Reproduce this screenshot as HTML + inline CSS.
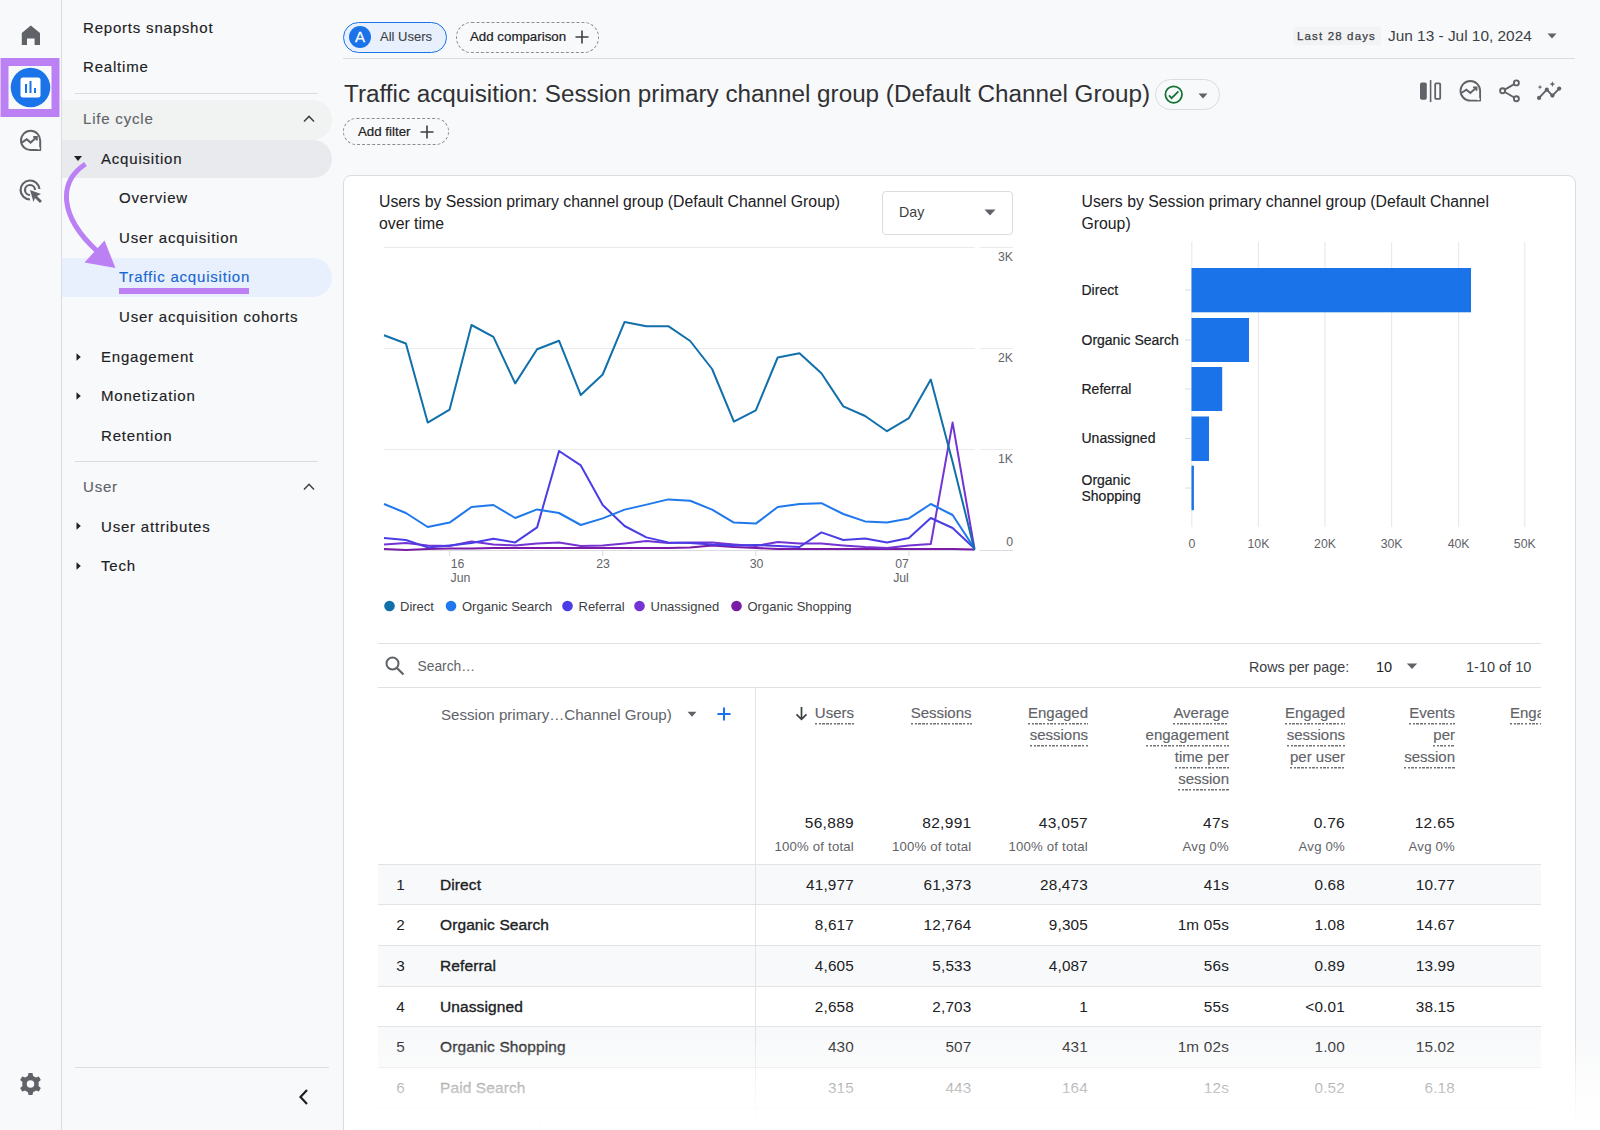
<!DOCTYPE html>
<html><head><meta charset="utf-8">
<style>
*{box-sizing:border-box;margin:0;padding:0}
html,body{width:1600px;height:1130px;overflow:hidden;background:#f8f9fa;font-family:"Liberation Sans",sans-serif;color:#202124}
.a{position:absolute;white-space:nowrap}
.rail{position:absolute;left:0;top:0;width:62px;height:1130px;border-right:1px solid #dadce0;background:#f8f9fa}
.nav{font-size:15px;letter-spacing:0.8px;color:#202124;line-height:22px;-webkit-text-stroke:0.15px currentColor}
.sec{color:#5f6368}
.hl{position:absolute;left:62px;width:270px;border-radius:0 20px 20px 0}
.tri{position:absolute;width:0;height:0}
.card{position:absolute;left:343px;top:175px;width:1233px;height:1000px;background:#fff;border:1px solid #dadce0;border-radius:8px}
.hd{font-size:15px;line-height:19px;color:#5f6368;-webkit-text-stroke:0.15px #5f6368;padding-bottom:3px;background:repeating-linear-gradient(to right,#6f7378 0 2.4px,transparent 2.4px 3.7px) left bottom/100% 1.5px no-repeat}
.tv{font-size:15.5px;line-height:20px;color:#202124;letter-spacing:0.3px}
.ts{font-size:13.2px;line-height:16px;color:#5f6368;letter-spacing:0.2px}
.rv{font-size:15.3px;line-height:20px;color:#202124;letter-spacing:0.2px}
.rn{font-size:15.5px;line-height:20px;color:#202124;-webkit-text-stroke:0.35px #202124;letter-spacing:0.1px}
</style></head><body>
<!-- left rail -->
<div class="rail"></div>
<!-- nav panel -->
<div id="navwrap">
<div class="a nav" style="left:83px;top:17px">Reports snapshot</div>
<div class="a nav" style="left:83px;top:56px">Realtime</div>
<div class="a" style="left:75px;top:93px;width:243px;height:1px;background:#dadce0"></div>
<div class="hl" style="top:100px;height:39.5px;background:#f1f3f3"></div>
<div class="a nav sec" style="left:83px;top:108px">Life cycle</div>
<div class="hl" style="top:139.5px;height:38.5px;background:#e8eaed"></div>
<div class="a nav" style="left:101px;top:148px">Acquisition</div>
<div class="a nav" style="left:119px;top:187px">Overview</div>
<div class="a nav" style="left:119px;top:227px">User acquisition</div>
<div class="hl" style="top:258px;height:39px;background:#e8f0fe"></div>
<div class="a nav" style="left:119px;top:266px;color:#1967d2">Traffic acquisition</div>
<div class="a" style="left:119px;top:288px;width:130px;height:6px;background:#bd7ff4"></div>
<div class="a nav" style="left:119px;top:306px">User acquisition cohorts</div>
<div class="a nav" style="left:101px;top:346px">Engagement</div>
<div class="a nav" style="left:101px;top:385px">Monetization</div>
<div class="a nav" style="left:101px;top:425px">Retention</div>
<div class="a" style="left:75px;top:461px;width:243px;height:1px;background:#dadce0"></div>
<div class="a nav sec" style="left:83px;top:476px">User</div>
<div class="a nav" style="left:101px;top:516px">User attributes</div>
<div class="a nav" style="left:101px;top:555px">Tech</div>
<div class="a" style="left:75px;top:1067px;width:254px;height:1px;background:#dadce0"></div>
</div>
<!-- rail icons -->
<svg class="a" style="left:0;top:0" width="62" height="1130" viewBox="0 0 62 1130">
 <path d="M30.8 25.5 L40 33 V45 H34.6 V38.6 H27 V45 H21.8 V33 Z" fill="#5f6368"/>
 <rect x="4.5" y="62" width="51" height="51" fill="none" stroke="#bc80f5" stroke-width="8"/>
 <circle cx="30.5" cy="87.5" r="19.8" fill="#1a73e8"/>
 <rect x="20.5" y="77.5" width="20" height="20" rx="2.5" fill="#fff"/>
 <rect x="25" y="84" width="2" height="9" fill="#1a73e8"/>
 <rect x="29.5" y="81" width="2" height="12" fill="#1a73e8"/>
 <rect x="34" y="88" width="2" height="5" fill="#1a73e8"/>
 <path d="M30.6 150 A9.6 9.6 0 1 1 40.2 140.4 V150 Z" fill="none" stroke="#5f6368" stroke-width="2" stroke-linejoin="round"/>
 <circle cx="38.5" cy="148.3" r="1.3" fill="#fff"/>
 <path d="M21.7 142.6 L26.7 139.3 L30.6 142.6 L36.2 137.6" fill="none" stroke="#5f6368" stroke-width="2"/>
 <path d="M33.2 137 H36.8 V140.5" fill="none" stroke="#5f6368" stroke-width="2"/>
 <g fill="none" stroke="#5f6368" stroke-width="2.2">
  <path d="M39.5 189 A9.5 9.5 0 1 0 30 199.5"/>
  <path d="M35 190 A5 5 0 1 0 30 195"/>
 </g>
 <path d="M30 190 L41 194 L37 196 L42 201 L40 203 L35 198 L33.5 202 Z" fill="#5f6368"/>
 <g transform="translate(30.5 1084) scale(1.1)" fill="#5f6368">
  <path d="M-1.8 -10 H1.8 L2.4 -7.2 A7.6 7.6 0 0 1 4.9 -5.8 L7.6 -6.8 L9.4 -3.7 L7.3 -1.8 A7.6 7.6 0 0 1 7.3 1.8 L9.4 3.7 L7.6 6.8 L4.9 5.8 A7.6 7.6 0 0 1 2.4 7.2 L1.8 10 H-1.8 L-2.4 7.2 A7.6 7.6 0 0 1 -4.9 5.8 L-7.6 6.8 L-9.4 3.7 L-7.3 1.8 A7.6 7.6 0 0 1 -7.3 -1.8 L-9.4 -3.7 L-7.6 -6.8 L-4.9 -5.8 A7.6 7.6 0 0 1 -2.4 -7.2 Z M0 -3.4 A3.4 3.4 0 1 0 0 3.4 A3.4 3.4 0 1 0 0 -3.4 Z" fill-rule="evenodd"/>
 </g>
</svg>
<!-- nav small icons + arrow -->
<svg class="a" style="left:62;top:0;left:62px" width="282" height="1130" viewBox="62 0 282 1130">
 <path d="M74 156 L82 156 L78 161 Z" fill="#202124"/>
 <path d="M76.5 353.2 L80.8 357 L76.5 360.8 Z" fill="#202124"/>
 <path d="M76.5 392.2 L80.8 396 L76.5 399.8 Z" fill="#202124"/>
 <path d="M76.5 522.2 L80.8 526 L76.5 529.8 Z" fill="#202124"/>
 <path d="M76.5 562.2 L80.8 566 L76.5 569.8 Z" fill="#202124"/>
 <path d="M304 121.6 L309 116.4 L314 121.6" fill="none" stroke="#3c4043" stroke-width="1.45"/>
 <path d="M304 489.4 L309 484.2 L314 489.4" fill="none" stroke="#3c4043" stroke-width="1.45"/>
 <path d="M307 1090 L300.5 1097 L307 1104" fill="none" stroke="#202124" stroke-width="2.2"/>
 <path d="M85.5 164 C 58 182, 59 216, 97 251" fill="none" stroke="#bc80f5" stroke-width="5"/>
 <path d="M84.5 262.5 L115.5 268 L104.5 240.5 Z" fill="#bc80f5"/>
</svg>
<!-- MAIN header -->
<div class="a" style="left:343px;top:22px;width:104px;height:31px;border:1px solid #1a73e8;background:#e8f0fe;border-radius:16px"></div>
<div class="a" style="left:349px;top:26px;width:22px;height:22px;border-radius:50%;background:#1a73e8;color:#fff;font-size:15px;line-height:22px;text-align:center;-webkit-text-stroke:0.3px #fff">A</div>
<div class="a" style="left:380px;top:29px;font-size:13px;line-height:16px;color:#3c4043;-webkit-text-stroke:0.1px #3c4043">All Users</div>
<div class="a" style="left:456px;top:22px;width:143px;height:31px;border:1px dashed #8a8f94;border-radius:16px"></div>
<div class="a" style="left:470px;top:29px;font-size:13.3px;line-height:16px;color:#202124;-webkit-text-stroke:0.2px #202124">Add comparison</div>
<svg class="a" style="left:575px;top:30px" width="14" height="14"><path d="M7 0.5V13.5M0.5 7H13.5" stroke="#3c4043" stroke-width="1.6"/></svg>
<div class="a" style="left:343px;top:58px;width:1232px;height:1px;background:#dadce0"></div>
<div class="a" style="left:1293px;top:27px;width:88px;height:18px;background:#f1f3f4;border-radius:2px"></div>
<div class="a" style="left:1297px;top:28.5px;font-size:11.5px;line-height:14px;letter-spacing:1.15px;color:#3c4043;-webkit-text-stroke:0.25px #3c4043">Last 28 days</div>
<div class="a" style="left:1388px;top:26px;font-size:15.4px;line-height:19px;color:#3c4043">Jun 13 - Jul 10, 2024</div>
<svg class="a" style="left:1546px;top:32px" width="12" height="8"><path d="M1.5 1.5H10.5L6 6.5Z" fill="#5f6368"/></svg>
<div class="a" style="left:344px;top:80px;font-size:24.25px;line-height:28px;color:#303134">Traffic acquisition: Session primary channel group (Default Channel Group)</div>
<div class="a" style="left:1155px;top:79px;width:65px;height:31px;border:1px solid #dadce0;border-radius:16px"></div>
<svg class="a" style="left:1162px;top:83px" width="24" height="24"><circle cx="11.7" cy="11.6" r="8.3" fill="none" stroke="#137333" stroke-width="1.75"/><path d="M7 12.3L9.6 15.2L16.4 8.3" fill="none" stroke="#137333" stroke-width="1.75"/></svg>
<svg class="a" style="left:1196.5px;top:91.5px" width="12" height="8"><path d="M1.5 1.5H10.5L6 6.5Z" fill="#5f6368"/></svg>
<svg class="a" style="left:1412px;top:76px" width="160" height="32" fill="#5f6368">
 <rect x="8" y="6.4" width="6.8" height="17.4" rx="1.8"/>
 <rect x="17.8" y="4.1" width="1.6" height="22"/>
 <rect x="23.2" y="7.3" width="5" height="15.6" rx="1" fill="none" stroke="#5f6368" stroke-width="1.8"/>
 <path d="M58.3 24.6 A9.8 9.8 0 1 1 68.1 14.8 V24.6 Z" fill="none" stroke="#5f6368" stroke-width="1.9" stroke-linejoin="round"/>
 <circle cx="66.4" cy="23" r="1.3" fill="#fff"/>
 <path d="M49.3 17 L54.4 13.7 L58.3 17 L63.9 12" fill="none" stroke="#5f6368" stroke-width="1.9"/>
 <path d="M61 11.4 H64.5 V14.8" fill="none" stroke="#5f6368" stroke-width="1.9"/>
 <g fill="none" stroke="#5f6368" stroke-width="1.9">
  <circle cx="104.4" cy="6.9" r="2.5"/><circle cx="90.6" cy="14.8" r="2.5"/><circle cx="104.4" cy="22.7" r="2.5"/>
  <path d="M92.8 13.6 L102.2 8.1 M92.8 16 L102.2 21.5"/>
 </g>
 <path d="M127.1 21.9 L134.8 13.7 L140.4 19.6 L147.2 12.6" fill="none" stroke="#5f6368" stroke-width="1.9"/>
 <circle cx="127.1" cy="21.9" r="2.1"/><circle cx="134.8" cy="13.7" r="2.1"/><circle cx="140.4" cy="19.6" r="2.1"/><circle cx="147.2" cy="12.6" r="2.1"/>
 <path d="M140.4 5.3 L141.2 7.3 L143.2 8.1 L141.2 8.9 L140.4 10.9 L139.6 8.9 L137.6 8.1 L139.6 7.3Z"/>
 <path d="M128 8.8 L128.7 10.4 L130.3 11.1 L128.7 11.8 L128 13.4 L127.3 11.8 L125.7 11.1 L127.3 10.4Z"/>
</svg>
<div class="a" style="left:343px;top:118px;width:106px;height:27px;border:1px dashed #8a8f94;border-radius:14px"></div>
<div class="a" style="left:358px;top:124px;font-size:13.3px;line-height:16px;color:#202124;-webkit-text-stroke:0.2px #202124">Add filter</div>
<svg class="a" style="left:420px;top:125px" width="14" height="14"><path d="M7 0.5V13.5M0.5 7H13.5" stroke="#3c4043" stroke-width="1.6"/></svg>
<!-- card -->
<div class="card"></div>
<div class="a" style="left:379px;top:191px;font-size:15.8px;line-height:22px;color:#202124">Users by Session primary channel group (Default Channel Group)<br>over time</div>
<div class="a" style="left:882px;top:191px;width:131px;height:44px;border:1px solid #dadce0;border-radius:4px;background:#fff"></div>
<div class="a" style="left:899px;top:203px;font-size:14.2px;line-height:18px;color:#3c4043">Day</div>
<svg class="a" style="left:983px;top:208px" width="14" height="9"><path d="M1.5 1.5H12.5L7 7.5Z" fill="#5f6368"/></svg>
<div class="a" style="left:1081.5px;top:191px;font-size:15.8px;line-height:22px;color:#202124">Users by Session primary channel group (Default Channel<br>Group)</div>
<svg class="a" style="left:0;top:0" width="1600" height="1130" viewBox="0 0 1600 1130" font-family="Liberation Sans" >
 <g stroke="#e8eaed" stroke-width="1.2">
  <path d="M384 247.5H975M979.5 247.5H1013M384 348.5H975M979.5 348.5H1013M384 449.5H975M979.5 449.5H1013"/>
 </g>
 <path d="M384 550.5H975M979.5 550.5H1013" stroke="#dadce0" stroke-width="1.2"/>
 <path d="M449.6 550V556M602.7 550V556M755.8 550V556M908.9 550V556" stroke="#dadce0" stroke-width="1"/>
 <g fill="#5f6368" font-size="12.3" text-anchor="end">
  <text x="1013" y="260.5">3K</text><text x="1013" y="361.5">2K</text><text x="1013" y="462.5">1K</text><text x="1013" y="546">0</text>
 </g>
 <g fill="#5f6368" font-size="12.3" text-anchor="middle">
  <text x="457.5" y="567.5">16</text><text x="460.5" y="581.5">Jun</text>
  <text x="603" y="567.5">23</text><text x="756.5" y="567.5">30</text>
  <text x="902" y="567.5">07</text><text x="901" y="581.5">Jul</text>
 </g>
 <g fill="none" stroke-width="2" stroke-linejoin="round">
  <polyline points="384.0,549.0 405.9,550.0 427.7,549.0 449.6,548.5 471.5,548.5 493.4,548.0 515.2,548.0 537.1,548.0 559.0,548.0 580.8,548.0 602.7,548.0 624.6,548.0 646.4,548.0 668.3,548.0 690.2,547.5 712.1,545.5 733.9,547.0 755.8,548.0 777.7,549.0 799.5,549.0 821.4,549.0 843.3,549.0 865.1,549.0 887.0,549.0 908.9,549.0 930.8,549.0 952.6,549.0 974.5,549.5" stroke="#7b1aa6"/>
  <polyline points="384.0,544.6 405.9,543.0 427.7,545.4 449.6,546.0 471.5,541.4 493.4,544.4 515.2,545.4 537.1,543.4 559.0,542.4 580.8,546.0 602.7,545.4 624.6,543.4 646.4,541.0 668.3,543.0 690.2,542.4 712.1,542.4 733.9,544.4 755.8,546.0 777.7,542.0 799.5,543.4 821.4,543.4 843.3,545.4 865.1,547.0 887.0,548.0 908.9,545.4 930.8,544.0 952.6,422.6 974.5,549.0" stroke="#7434d4"/>
  <polyline points="384.0,538.0 405.9,540.0 427.7,547.4 449.6,545.4 471.5,543.0 493.4,538.8 515.2,542.4 537.1,527.4 559.0,451.0 580.8,465.4 602.7,505.0 624.6,526.0 646.4,537.4 668.3,542.4 690.2,543.0 712.1,544.5 733.9,545.5 755.8,545.0 777.7,546.0 799.5,547.0 821.4,532.4 843.3,540.0 865.1,538.6 887.0,542.4 908.9,538.0 930.8,518.0 952.6,528.0 974.5,548.5" stroke="#4a3de6"/>
  <polyline points="384.0,504.0 405.9,513.0 427.7,527.0 449.6,522.6 471.5,507.0 493.4,505.0 515.2,518.0 537.1,509.4 559.0,513.0 580.8,525.0 602.7,518.4 624.6,509.6 646.4,504.6 668.3,499.4 690.2,500.8 712.1,509.6 733.9,522.6 755.8,523.6 777.7,507.0 799.5,504.0 821.4,503.2 843.3,514.0 865.1,521.4 887.0,522.6 908.9,518.4 930.8,504.0 952.6,515.0 974.5,548.5" stroke="#1f78ec"/>
  <polyline points="384.0,335.3 405.9,343.5 427.7,422.6 449.6,409.6 471.5,325.0 493.4,336.9 515.2,383.4 537.1,349.3 559.0,340.7 580.8,395.1 602.7,374.5 624.6,321.9 646.4,326.2 668.3,326.2 690.2,341.0 712.1,369.0 733.9,421.7 755.8,410.4 777.7,357.5 799.5,353.3 821.4,373.2 843.3,406.4 865.1,416.0 887.0,431.2 908.9,418.1 930.8,379.6 952.6,462.0 974.5,550.0" stroke="#1170aa"/>
 </g>
 <g font-size="13" fill="#3c4043">
  <circle cx="389.5" cy="606" r="5.3" fill="#1170aa"/><text x="400" y="610.5">Direct</text>
  <circle cx="451" cy="606" r="5.3" fill="#1f78ec"/><text x="462" y="610.5">Organic Search</text>
  <circle cx="567.5" cy="606" r="5.3" fill="#4a3de6"/><text x="578.5" y="610.5">Referral</text>
  <circle cx="639.5" cy="606" r="5.3" fill="#7434d4"/><text x="650.5" y="610.5">Unassigned</text>
  <circle cx="736.5" cy="606" r="5.3" fill="#7b1aa6"/><text x="747.5" y="610.5">Organic Shopping</text>
 </g>
 <g stroke="#e8eaed" stroke-width="1.2">
  <path d="M1191.8 242V527M1258.4 242V527M1325 242V527M1391.6 242V527M1458.6 242V527M1524.8 242V527"/>
 </g>
 <path d="M1185 290H1191M1185 340H1191M1185 389H1191M1185 438.5H1191M1185 488H1191" stroke="#dadce0" stroke-width="1"/>
 <g fill="#1a73e8">
  <rect x="1191.5" y="268" width="279.5" height="44.3"/>
  <rect x="1191.5" y="318" width="57.5" height="44"/>
  <rect x="1191.5" y="367" width="30.7" height="44"/>
  <rect x="1191.5" y="416.5" width="17.5" height="44.5"/>
  <rect x="1191.5" y="465.7" width="2.4" height="44.5"/>
 </g>
 <g font-size="14" fill="#202124" stroke="#202124" stroke-width="0.2">
  <text x="1081.5" y="294.5">Direct</text>
  <text x="1081.5" y="344.5">Organic Search</text>
  <text x="1081.5" y="393.5">Referral</text>
  <text x="1081.5" y="443">Unassigned</text>
  <text x="1081.5" y="485">Organic</text>
  <text x="1081.5" y="500.5">Shopping</text>
 </g>
 <g fill="#5f6368" font-size="12.3" text-anchor="middle">
  <text x="1191.8" y="548">0</text><text x="1258.4" y="548">10K</text><text x="1325" y="548">20K</text><text x="1391.6" y="548">30K</text><text x="1458.6" y="548">40K</text><text x="1524.8" y="548">50K</text>
 </g>
</svg>
<div class="a" style="left:378px;top:643px;width:1163px;height:1px;background:#e0e0e0"></div>
<svg class="a" style="left:384px;top:655px" width="22" height="22"><circle cx="8.5" cy="8.5" r="6" fill="none" stroke="#5f6368" stroke-width="2"/><path d="M13 13L19.5 19.5" stroke="#5f6368" stroke-width="2.2"/></svg>
<div class="a" style="left:417.5px;top:658px;font-size:13.8px;line-height:18px;color:#5f6368">Search…</div>
<div class="a" style="left:1249px;top:657.5px;font-size:14.3px;line-height:18px;color:#3c4043">Rows per page:</div>
<div class="a" style="left:1376px;top:657.5px;font-size:14.5px;line-height:18px;color:#202124">10</div>
<svg class="a" style="left:1406px;top:663px" width="12" height="7"><path d="M0.8 0.5H11.2L6 6Z" fill="#5f6368"/></svg>
<div class="a" style="left:1466px;top:657.5px;font-size:14.5px;line-height:18px;color:#3c4043">1-10 of 10</div>
<div class="a" style="left:378px;top:687px;width:1163px;height:1px;background:#e0e0e0"></div>
<div class="a" style="left:378px;top:864.5px;width:1163px;height:40.1px;background:#f8f9fa"></div>
<div class="a" style="left:378px;top:945.3px;width:1163px;height:40.9px;background:#f8f9fa"></div>
<div class="a" style="left:378px;top:1026.9px;width:1163px;height:40.6px;background:#f8f9fa"></div>
<div class="a" style="left:378px;top:864.0px;width:1163px;height:1px;background:#e3e3e3"></div>
<div class="a" style="left:378px;top:904.1px;width:1163px;height:1px;background:#e3e3e3"></div>
<div class="a" style="left:378px;top:944.8px;width:1163px;height:1px;background:#e3e3e3"></div>
<div class="a" style="left:378px;top:985.7px;width:1163px;height:1px;background:#e3e3e3"></div>
<div class="a" style="left:378px;top:1026.4px;width:1163px;height:1px;background:#e3e3e3"></div>
<div class="a" style="left:378px;top:1067.0px;width:1163px;height:1px;background:#e3e3e3"></div>
<div class="a" style="left:378px;top:1107.7px;width:1163px;height:1px;background:#e3e3e3"></div>
<div class="a" style="left:378px;top:1148.3px;width:1163px;height:1px;background:#e3e3e3"></div>
<div class="a" style="left:754.5px;top:687px;width:1px;height:460px;background:#e3e3e3"></div>
<div class="a" style="left:441px;top:705px;font-size:15.1px;line-height:19px;color:#5f6368">Session primary…Channel Group)</div>
<svg class="a" style="left:687px;top:711px" width="10" height="7"><path d="M0.5 0.8H9.5L5 5.8Z" fill="#5f6368"/></svg>
<svg class="a" style="left:716px;top:706px" width="16" height="16"><path d="M8 1.5V14.5M1.5 8H14.5" stroke="#1a73e8" stroke-width="2"/></svg>
<svg class="a" style="left:795px;top:706px" width="13" height="15"><path d="M6.5 1V13M1.5 8.3L6.5 13.3L11.5 8.3" fill="none" stroke="#3c4043" stroke-width="1.7"/></svg>
<div class="a hd" style="right:746.0px;top:702.5px">Users</div>
<div class="a hd" style="right:628.5px;top:702.5px">Sessions</div>
<div class="a hd" style="right:512.0px;top:702.5px">Engaged</div>
<div class="a hd" style="right:512.0px;top:724.5px">sessions</div>
<div class="a hd" style="right:371.0px;top:702.5px">Average</div>
<div class="a hd" style="right:371.0px;top:724.5px">engagement</div>
<div class="a hd" style="right:371.0px;top:746.5px">time per</div>
<div class="a hd" style="right:371.0px;top:768.5px">session</div>
<div class="a hd" style="right:255.0px;top:702.5px">Engaged</div>
<div class="a hd" style="right:255.0px;top:724.5px">sessions</div>
<div class="a hd" style="right:255.0px;top:746.5px">per user</div>
<div class="a hd" style="right:145.0px;top:702.5px">Events</div>
<div class="a hd" style="right:145.0px;top:724.5px">per</div>
<div class="a hd" style="right:145.0px;top:746.5px">session</div>
<div class="a hd" style="left:1510px;top:702.5px;width:31px;overflow:hidden">Engagement</div>
<div class="a tv" style="right:746.0px;top:812.5px">56,889</div>
<div class="a ts" style="right:746.0px;top:838.5px">100% of total</div>
<div class="a tv" style="right:628.5px;top:812.5px">82,991</div>
<div class="a ts" style="right:628.5px;top:838.5px">100% of total</div>
<div class="a tv" style="right:512.0px;top:812.5px">43,057</div>
<div class="a ts" style="right:512.0px;top:838.5px">100% of total</div>
<div class="a tv" style="right:371.0px;top:812.5px">47s</div>
<div class="a ts" style="right:371.0px;top:838.5px">Avg 0%</div>
<div class="a tv" style="right:255.0px;top:812.5px">0.76</div>
<div class="a ts" style="right:255.0px;top:838.5px">Avg 0%</div>
<div class="a tv" style="right:145.0px;top:812.5px">12.65</div>
<div class="a ts" style="right:145.0px;top:838.5px">Avg 0%</div>
<div class="a rv" style="left:392px;width:17px;text-align:center;top:874.5px">1</div>
<div class="a rn" style="left:440px;top:874.5px">Direct</div>
<div class="a rv" style="right:746.0px;top:874.5px">41,977</div>
<div class="a rv" style="right:628.5px;top:874.5px">61,373</div>
<div class="a rv" style="right:512.0px;top:874.5px">28,473</div>
<div class="a rv" style="right:371.0px;top:874.5px">41s</div>
<div class="a rv" style="right:255.0px;top:874.5px">0.68</div>
<div class="a rv" style="right:145.0px;top:874.5px">10.77</div>
<div class="a rv" style="left:392px;width:17px;text-align:center;top:915.0px">2</div>
<div class="a rn" style="left:440px;top:915.0px">Organic Search</div>
<div class="a rv" style="right:746.0px;top:915.0px">8,617</div>
<div class="a rv" style="right:628.5px;top:915.0px">12,764</div>
<div class="a rv" style="right:512.0px;top:915.0px">9,305</div>
<div class="a rv" style="right:371.0px;top:915.0px">1m 05s</div>
<div class="a rv" style="right:255.0px;top:915.0px">1.08</div>
<div class="a rv" style="right:145.0px;top:915.0px">14.67</div>
<div class="a rv" style="left:392px;width:17px;text-align:center;top:955.8px">3</div>
<div class="a rn" style="left:440px;top:955.8px">Referral</div>
<div class="a rv" style="right:746.0px;top:955.8px">4,605</div>
<div class="a rv" style="right:628.5px;top:955.8px">5,533</div>
<div class="a rv" style="right:512.0px;top:955.8px">4,087</div>
<div class="a rv" style="right:371.0px;top:955.8px">56s</div>
<div class="a rv" style="right:255.0px;top:955.8px">0.89</div>
<div class="a rv" style="right:145.0px;top:955.8px">13.99</div>
<div class="a rv" style="left:392px;width:17px;text-align:center;top:996.6px">4</div>
<div class="a rn" style="left:440px;top:996.6px">Unassigned</div>
<div class="a rv" style="right:746.0px;top:996.6px">2,658</div>
<div class="a rv" style="right:628.5px;top:996.6px">2,703</div>
<div class="a rv" style="right:512.0px;top:996.6px">1</div>
<div class="a rv" style="right:371.0px;top:996.6px">55s</div>
<div class="a rv" style="right:255.0px;top:996.6px">&lt;0.01</div>
<div class="a rv" style="right:145.0px;top:996.6px">38.15</div>
<div class="a rv" style="left:392px;width:17px;text-align:center;top:1037.2px">5</div>
<div class="a rn" style="left:440px;top:1037.2px">Organic Shopping</div>
<div class="a rv" style="right:746.0px;top:1037.2px">430</div>
<div class="a rv" style="right:628.5px;top:1037.2px">507</div>
<div class="a rv" style="right:512.0px;top:1037.2px">431</div>
<div class="a rv" style="right:371.0px;top:1037.2px">1m 02s</div>
<div class="a rv" style="right:255.0px;top:1037.2px">1.00</div>
<div class="a rv" style="right:145.0px;top:1037.2px">15.02</div>
<div class="a rv" style="left:392px;width:17px;text-align:center;top:1077.8px">6</div>
<div class="a rn" style="left:440px;top:1077.8px">Paid Search</div>
<div class="a rv" style="right:746.0px;top:1077.8px">315</div>
<div class="a rv" style="right:628.5px;top:1077.8px">443</div>
<div class="a rv" style="right:512.0px;top:1077.8px">164</div>
<div class="a rv" style="right:371.0px;top:1077.8px">12s</div>
<div class="a rv" style="right:255.0px;top:1077.8px">0.52</div>
<div class="a rv" style="right:145.0px;top:1077.8px">6.18</div>
<div class="a rv" style="left:392px;width:17px;text-align:center;top:1118.5px">7</div>
<div class="a rn" style="left:440px;top:1118.5px">Organic Social</div>
<div class="a rv" style="right:746.0px;top:1118.5px">120</div>
<div class="a rv" style="right:628.5px;top:1118.5px">150</div>
<div class="a rv" style="right:512.0px;top:1118.5px">80</div>
<div class="a rv" style="right:371.0px;top:1118.5px">30s</div>
<div class="a rv" style="right:255.0px;top:1118.5px">0.40</div>
<div class="a rv" style="right:145.0px;top:1118.5px">5.10</div>
<div class="a" style="left:344px;top:1036px;width:1256px;height:94px;background:linear-gradient(to bottom,rgba(255,255,255,0) 0px,rgba(255,255,255,0.7) 51px,rgba(255,255,255,1) 90px)"></div>
</body></html>
